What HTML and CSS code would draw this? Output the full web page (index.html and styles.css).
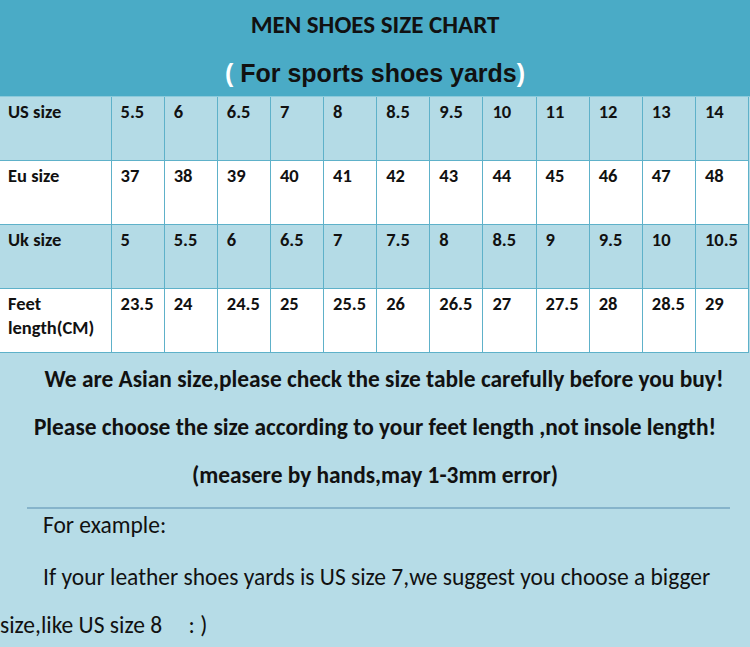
FILE: index.html
```html
<!DOCTYPE html>
<html>
<head>
<meta charset="utf-8">
<link rel="stylesheet" href="styles.css">
</head>
<body>
<div class="chart">
  <header class="head">
    <h1 class="title">MEN SHOES SIZE CHART</h1>
    <p class="subtitle"><span class="paren">(</span> For sports shoes yards<span class="paren">)</span></p>
  </header>
  <table class="sizes">
    <colgroup>
      <col class="c-label">
      <col><col><col><col><col><col><col><col><col><col><col><col>
    </colgroup>
    <tr class="blue">
      <th>US size</th><td>5.5</td><td>6</td><td>6.5</td><td>7</td><td>8</td><td>8.5</td><td>9.5</td><td>10</td><td>11</td><td>12</td><td>13</td><td>14</td>
    </tr>
    <tr class="white">
      <th>Eu size</th><td>37</td><td>38</td><td>39</td><td>40</td><td>41</td><td>42</td><td>43</td><td>44</td><td>45</td><td>46</td><td>47</td><td>48</td>
    </tr>
    <tr class="blue">
      <th>Uk size</th><td>5</td><td>5.5</td><td>6</td><td>6.5</td><td>7</td><td>7.5</td><td>8</td><td>8.5</td><td>9</td><td>9.5</td><td>10</td><td>10.5</td>
    </tr>
    <tr class="white">
      <th>Feet length(CM)</th><td>23.5</td><td>24</td><td>24.5</td><td>25</td><td>25.5</td><td>26</td><td>26.5</td><td>27</td><td>27.5</td><td>28</td><td>28.5</td><td>29</td>
    </tr>
  </table>
  <section class="notes">
    <p class="note note-1">We are Asian size,please check the size table carefully before you buy!</p>
    <p class="note">Please choose the size according to your feet length ,not insole length!</p>
    <p class="note">(measere by hands,may 1-3mm error)</p>
    <hr class="rule">
    <p class="ex ex-head">For example:</p>
    <p class="ex ex-body">If your leather shoes yards is US size 7,we suggest you choose a bigger<br>size,like US size 8&nbsp;&nbsp;&nbsp;&nbsp; : )</p>
  </section>
</div>
</body>
</html>
```

FILE: styles.css
```css
html, body {
  margin: 0;
  padding: 0;
  background: #b6dce7;
}
.chart {
  width: 750px;
  height: 647px;
  overflow: hidden;
  font-family: "Carlito", "Lato", "Open Sans", sans-serif;
  color: #111;
}
.head {
  background: #4aabc6;
  height: 96px;
  border-bottom: 1px solid #8ccadb;
  text-align: center;
}
.title {
  margin: 0;
  padding-top: 10px;
  font-size: 25px;
  line-height: 30px;
  font-weight: 700;
}
.subtitle {
  margin: 18px 0 0;
  font-family: "Liberation Sans", Arial, sans-serif;
  font-size: 25px;
  line-height: 30px;
  font-weight: 700;
}
.paren {
  color: #fff;
}
.sizes {
  width: 749px;
  table-layout: fixed;
  border-collapse: collapse;
  font-size: 18.5px;
  font-weight: 700;
}
.c-label {
  width: 111px;
}
.sizes th,
.sizes td {
  height: 60px;
  padding: 3px 0 0 8px;
  text-align: left;
  vertical-align: top;
  line-height: 24px;
  border: 1px solid #5eb1c9;
  border-top: 0;
  font-weight: 700;
}
.sizes td {
  padding-left: 9px;
}
.sizes th {
  border-left: 0;
}
.blue {
  background: #b4dbe6;
}
.white {
  background: #fff;
}
.notes {
  padding-top: 2px;
}
.note {
  margin: 0;
  text-align: center;
  font-size: 23.4px;
  font-weight: 700;
  line-height: 48px;
  white-space: nowrap;
}
.note-1 {
  padding-left: 18px;
}
.rule {
  margin: 8px 20px 0 27px;
  border: 0;
  border-top: 2px solid #86b4cb;
  height: 0;
}
.ex {
  margin: 0;
  font-size: 23.5px;
  font-weight: 400;
  white-space: nowrap;
}
.ex-head {
  padding-left: 43px;
  line-height: 32px;
}
.ex-body {
  margin-top: 12px;
  text-indent: 43px;
  line-height: 48px;
}
```
